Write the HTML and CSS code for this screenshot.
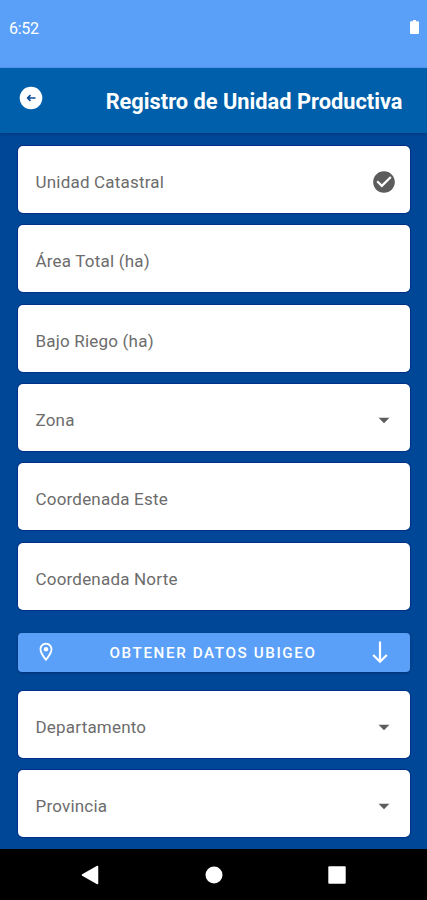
FILE: index.html
```
<!DOCTYPE html>
<html lang="es">
<head>
<meta charset="UTF-8">
<meta name="viewport" content="width=device-width, initial-scale=1.0">
<title>Registro de Unidad Productiva</title>
<link rel="stylesheet" href="styles.css">
</head>

<body>

<div class="status-bar">
    <span class="time">6:52</span>
    <svg class="battery" width="9" height="14" viewBox="0 0 9 14"><path d="M3 0h3v1.2h2q1 0 1 1V13q0 1-1 1H1q-1 0-1-1V2.200q0-1 1-1h2z" fill="#fff"/></svg>
</div>

<header class="toolbar">
    <svg class="back" width="24" height="24" viewBox="0 0 24 24">
        <circle cx="12" cy="12" r="11.300" fill="#fff"/>
        <path d="M16.500 12H9M11.500 9.200L8.700 12l2.800 2.800" fill="none" stroke="#0b4c98" stroke-width="1.700"/>
    </svg>
    <h1>Registro de Unidad Productiva</h1>
</header>

<main class="form">
    <div class="field">
        <span>Unidad Catastral</span>
        <svg width="26" height="26" viewBox="0 0 24 24"><path d="M12 2C6.480 2 2 6.480 2 12s4.480 10 10 10 10-4.480 10-10S17.520 2 12 2zm-2 15l-5-5 1.410-1.410L10 14.170l7.590-7.590L19 8l-9 9z" fill="#5c5c5c"/></svg>
    </div>
    <div class="field"><span>Área Total (ha)</span></div>
    <div class="field"><span>Bajo Riego (ha)</span></div>
    <div class="field">
        <span>Zona</span>
        <svg width="26" height="26" viewBox="0 0 24 24"><path d="M7 10l5 5 5-5z" fill="#5c5c5c"/></svg>
    </div>
    <div class="field"><span>Coordenada Este</span></div>
    <div class="field"><span>Coordenada Norte</span></div>

    <button class="ubigeo" type="button">
        <svg class="pin" width="22" height="22" viewBox="0 0 24 24"><path d="M12 2C8.130 2 5 5.130 5 9c0 5.250 7 13 7 13s7-7.750 7-13c0-3.870-3.130-7-7-7zM7 9c0-2.760 2.240-5 5-5s5 2.240 5 5c0 2.880-2.880 7.190-5 9.880C9.920 16.210 7 11.850 7 9z" fill="#fff"/><circle cx="12" cy="9" r="2.500" fill="#fff"/></svg>
        <span>OBTENER DATOS UBIGEO</span>
        <svg class="down" width="16" height="23" viewBox="0 0 16 23"><path d="M8 .500v20M1.200 14L8 20.800 14.800 14" fill="none" stroke="#fff" stroke-width="2.200"/></svg>
    </button>

    <div class="field">
        <span>Departamento</span>
        <svg width="26" height="26" viewBox="0 0 24 24"><path d="M7 10l5 5 5-5z" fill="#5c5c5c"/></svg>
    </div>
    <div class="field">
        <span>Provincia</span>
        <svg width="26" height="26" viewBox="0 0 24 24"><path d="M7 10l5 5 5-5z" fill="#5c5c5c"/></svg>
    </div>
</main>

<nav class="nav-bar">
    <svg width="18" height="20" viewBox="0 0 18 20"><path d="M16.500 1.500v17L1.500 10z" fill="#fff" stroke="#fff" stroke-width="1.500" stroke-linejoin="round"/></svg>
    <svg width="18" height="18" viewBox="0 0 18 18"><circle cx="9" cy="9" r="8.500" fill="#fff"/></svg>
    <svg width="18" height="18" viewBox="0 0 18 18"><rect x=".300" y=".300" width="17.400" height="17.400" rx="1" fill="#fff"/></svg>
</nav>

</body>
</html>
```
FILE: styles.css
```
* {
    box-sizing: border-box;
}

body {
    margin: 0;
    height: 900px;
    display: flex;
    flex-direction: column;
    overflow: hidden;
    background: #004897;
    font-family: Roboto, sans-serif;
}

.status-bar {
    height: 68px;
    flex: none;
    display: flex;
    justify-content: space-between;
    align-items: flex-start;
    padding: 20px 8px 0 9px;
    background: #5a9ff8;
    color: #fff;
}

.time {
    font-size: 16px;
    line-height: 17px;
    letter-spacing: -0.3px;
}

.toolbar {
    height: 65px;
    flex: none;
    display: flex;
    justify-content: space-between;
    align-items: flex-start;
    padding: 18px 24.5px 0 19px;
    background: #005faa;
    box-shadow: 0 1px 3px rgba(0, 20, 80, 0.4);
}

.toolbar h1 {
    margin: 2px 0 0;
    font-size: 21.8px;
    line-height: 28px;
    font-weight: 700;
    color: #fff;
    white-space: nowrap;
}

.form {
    flex: 1;
    display: flex;
    flex-direction: column;
    gap: 12.35px;
    padding: 13px 17px 0 18px;
}

.field {
    height: 67px;
    flex: none;
    display: flex;
    align-items: center;
    justify-content: space-between;
    padding: 5px 13px 0 17.5px;
    background: #fff;
    border-radius: 5px;
    box-shadow: 0 0 1px 1px #003088;
    color: #6c6c6c;
    font-size: 17px;
    letter-spacing: 0.2px;
}

.ubigeo {
    height: 39.5px;
    flex: none;
    display: flex;
    align-items: center;
    justify-content: space-between;
    margin: 10.5px 0 6.5px;
    padding: 0 22px 0 17px;
    border: none;
    border-radius: 4px;
    background: #5a9ff8;
    box-shadow: 0 1px 3px rgba(0, 20, 80, 0.5);
    color: #fff;
    font-family: inherit;
    font-size: 15.2px;
    font-weight: 500;
    letter-spacing: 1.6px;
}

.ubigeo span {
    padding: 2px 3px 0 0;
}

.nav-bar {
    height: 51px;
    flex: none;
    display: flex;
    align-items: center;
    justify-content: space-between;
    padding: 0 81px;
    background: #000;
}
```
